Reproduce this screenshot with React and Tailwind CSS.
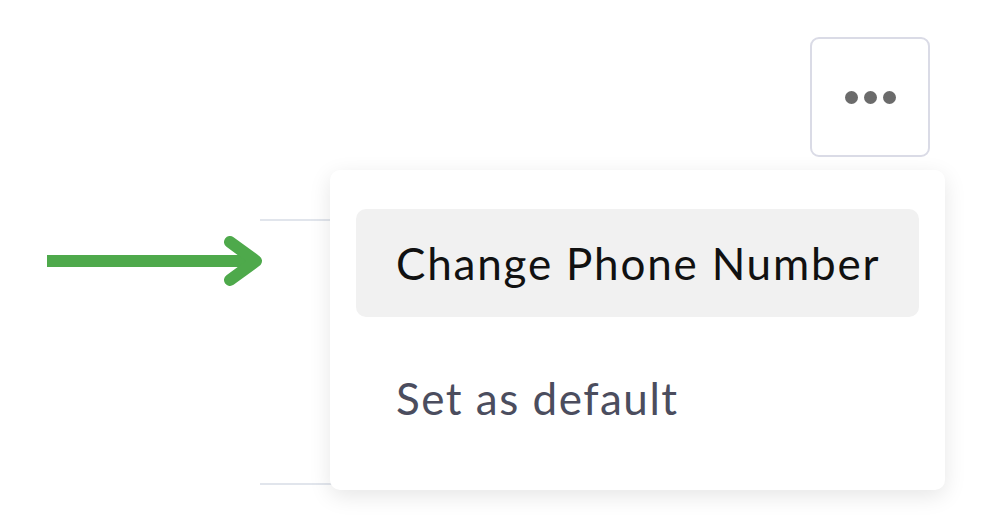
export default function App() {
  return (
    <div className="relative h-[522px] w-[982px] overflow-hidden bg-white font-['Lato',sans-serif]">
      {/* More actions button */}
      <div className="flex justify-end pt-[37px] pr-[52px]">
        <button className="flex h-[120px] w-[120px] items-center justify-center gap-[6px] rounded-[9px] border-2 border-[#dadbe6] bg-white">
          <span className="h-[13px] w-[13px] rounded-full bg-[#6b6b6b]" />
          <span className="h-[13px] w-[13px] rounded-full bg-[#6b6b6b]" />
          <span className="h-[13px] w-[13px] rounded-full bg-[#6b6b6b]" />
        </button>
      </div>

      {/* Row behind the menu */}
      <div className="mt-[62px] ml-[260px] mr-[52px] h-[266px] border-y-2 border-[#e1e5ec]" />

      {/* Annotation arrow */}
      <svg className="absolute left-[44px] top-[234px]" width="226" height="54" viewBox="0 0 226 54">
        <path d="M3 27H212" stroke="#4ea94b" strokeWidth="12" />
        <path d="M186 8L212 27L186 46" stroke="#4ea94b" strokeWidth="12" strokeLinecap="round" strokeLinejoin="round" fill="none" />
      </svg>

      {/* Dropdown menu */}
      <div className="absolute left-[330px] top-[170px] flex h-[320px] w-[615px] flex-col gap-[27px] rounded-[10px] bg-white px-[26px] pt-[39px] shadow-[0_6px_22px_rgba(0,0,0,0.10)]">
        <div className="flex h-[108px] items-center whitespace-nowrap rounded-[10px] bg-[#f1f1f1] px-[40px] text-[44px] leading-none tracking-[1.8px] text-[#111111]">
          Change Phone Number
        </div>
        <div className="flex h-[108px] items-center whitespace-nowrap px-[40px] text-[44px] leading-none tracking-[1.5px] text-[#4b4d5e]">
          Set as default
        </div>
      </div>
    </div>
  );
}
